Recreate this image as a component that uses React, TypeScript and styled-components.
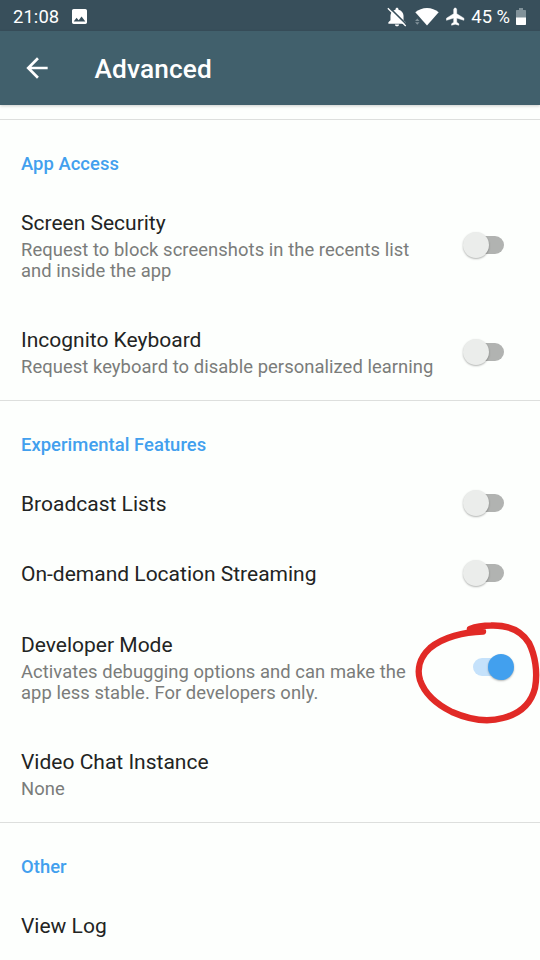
import React from 'react';
import styled, { createGlobalStyle } from 'styled-components';

const GlobalStyle = createGlobalStyle`
  * { box-sizing: border-box; }
  body { margin: 0; background: #fdfffd; }
`;

const Screen = styled.div`
  position: relative;
  display: flex;
  flex-direction: column;
  width: 540px;
  height: 960px;
  overflow: hidden;
  background: #fdfffd;
  font-family: Roboto, 'Liberation Sans', sans-serif;
`;

const StatusBar = styled.header`
  display: flex;
  align-items: center;
  justify-content: space-between;
  flex: none;
  height: 31px;
  padding: 2px 14px 0 13px;
  background: #384f5b;
  color: #fff;
  font-size: 18.4px;
`;

const StatusLeft = styled.div`
  display: flex;
  align-items: center;
  gap: 13px;
`;

const StatusRight = styled.div`
  display: flex;
  align-items: center;
`;

const Clock = styled.span`
  letter-spacing: 0.1px;
`;

const WifiIcon = styled.svg`
  margin-left: 5px;
`;

const BatteryLevel = styled.span`
  margin: 0 6px 0 0;
  white-space: nowrap;
`;

const AppBar = styled.nav`
  display: flex;
  align-items: center;
  flex: none;
  height: 74px;
  padding: 0 21px;
  background: #41606c;
  color: #fff;
  box-shadow: 0 1px 3px rgba(0, 0, 0, 0.2);
  z-index: 1;
`;

const BackButton = styled.button`
  display: flex;
  width: 32px;
  height: 32px;
  padding: 0;
  border: 0;
  background: none;
  color: inherit;
`;

const PageTitle = styled.h1`
  margin: 2px 0 0 41.5px;
  font-size: 26.25px;
  font-weight: 500;
  letter-spacing: 0.12px;
  line-height: 32px;
`;

const Settings = styled.main`
  flex: none;
  padding-top: 14px;
`;

const Section = styled.section`
  border-top: 1.5px solid #dddfdd;
`;

const SectionTitle = styled.h2`
  display: flex;
  align-items: center;
  height: 66.5px;
  margin: 0;
  padding: 21px 21px 0;
  color: #42a0ee;
  font-size: 18.4px;
  font-weight: 500;
  letter-spacing: 0.05px;
`;

const Row = styled.div<{ $height: number }>`
  display: flex;
  align-items: center;
  height: ${(p) => p.$height}px;
  padding: 0 26px 0 21px;
`;

const RowText = styled.div<{ $detailed: boolean }>`
  flex: 1;
  padding-top: ${(p) => (p.$detailed ? 1.5 : 2.5)}px;
`;

const RowTitle = styled.div`
  color: #222423;
  font-size: 21px;
  line-height: 25px;
`;

const Summary = styled.div`
  margin-top: 3px;
  color: #7a7c7a;
  font-size: 18.4px;
  letter-spacing: 0.055px;
  line-height: 21.5px;
  white-space: pre-line;
`;

const Track = styled.div<{ $on: boolean }>`
  display: flex;
  align-items: center;
  justify-content: ${(p) => (p.$on ? 'flex-end' : 'flex-start')};
  flex: none;
  width: 31px;
  height: 18px;
  margin-right: 10px;
  border-radius: 9px;
  background: ${(p) => (p.$on ? '#c5e2fb' : '#b1b3b1')};
`;

const Thumb = styled.div<{ $on: boolean }>`
  flex: none;
  width: 26px;
  height: 26px;
  margin: 0 -10px;
  border-radius: 50%;
  background: ${(p) => (p.$on ? '#42a0ee' : '#ebedeb')};
  box-shadow: 0 1px 2px rgba(0, 0, 0, 0.3);
`;

const Marker = styled.svg`
  position: absolute;
  left: 400px;
  top: 610px;
  pointer-events: none;
`;

function Toggle({ on }: { on: boolean }) {
  return (
    <Track $on={on} role="switch" aria-checked={on}>
      <Thumb $on={on} />
    </Track>
  );
}

interface Item {
  title: string;
  summary?: string;
  on?: boolean;
  height: number;
}

const sections: { title: string; items: Item[] }[] = [
  {
    title: 'App Access',
    items: [
      {
        title: 'Screen Security',
        summary: 'Request to block screenshots in the recents list\nand inside the app',
        on: false,
        height: 117.5,
      },
      {
        title: 'Incognito Keyboard',
        summary: 'Request keyboard to disable personalized learning',
        on: false,
        height: 96,
      },
    ],
  },
  {
    title: 'Experimental Features',
    items: [
      { title: 'Broadcast Lists', on: false, height: 70.5 },
      { title: 'On-demand Location Streaming', on: false, height: 70.5 },
      {
        title: 'Developer Mode',
        summary: 'Activates debugging options and can make the\napp less stable. For developers only.',
        on: true,
        height: 117.5,
      },
      { title: 'Video Chat Instance', summary: 'None', height: 96 },
    ],
  },
  { title: 'Other', items: [{ title: 'View Log', height: 70.5 }] },
];

export default function App() {
  return (
    <Screen>
      <GlobalStyle />
      <StatusBar>
        <StatusLeft>
          <Clock>21:08</Clock>
          <svg width="15" height="15" viewBox="3 3 18 18" fill="#fff">
            <path d="M21 19V5c0-1.100-.9-2-2-2H5c-1.100 0-2 .9-2 2v14c0 1.100.9 2 2 2h14c1.100 0 2-.9 2-2zM8.500 13.500l2.500 3.010L14.500 12l4.500 6H5l3.500-4.500z" />
          </svg>
        </StatusLeft>
        <StatusRight>
          <svg width="20" height="20" viewBox="0 0 19 19">
            <path d="M9.500 .6c-.8 0-1.400.6-1.400 1.400v.6C5.200 3.300 3.300 5.600 3.300 8.400v4.200L1.300 14.600v1.200h16.400v-1.200l-2-2V8.400c0-2.800-1.900-5.100-4.800-5.800V2c0-.8-.6-1.400-1.400-1.400zM7.500 16.600c0 1 .9 1.800 2 1.800s2-.8 2-1.800z" fill="#fff" />
            <path d="M1.700 0L19 17" stroke="#384f5b" strokeWidth="1.600" />
            <path d="M.8 1.200L17.800 18" stroke="#fff" strokeWidth="1.300" />
          </svg>
          <WifiIcon width="27" height="19" viewBox="0 0 27 19">
            <path d="M3.300 5.200C6.400 2.700 10.600 1 15 1s8.600 1.700 11.700 4.200L15 18.500z" fill="#fff" />
            <path d="M5.300 11.400l2.200 2.500H3.100zM5.300 17.700l2.200-2.500H3.100z" fill="#81929a" />
          </WifiIcon>
          <svg width="32" height="20" viewBox="0 0 32 20">
            <path d="M24.900 13.300v-2.100l-7.200-4.500V2.700c0-1-.7-1.700-1.500-1.700s-1.500.7-1.500 1.700v4l-7.200 4.500v2.100l7.200-2.300v4.300l-2.100 1.500v1.400l3.600-1 3.600 1v-1.400l-2.100-1.500V11z" fill="#fff" stroke="#fff" strokeWidth=".5" />
          </svg>
          <BatteryLevel>45 %</BatteryLevel>
          <svg width="10" height="17" viewBox="0 0 10 17">
            <path d="M3 0h4v2h2c.6 0 1 .4 1 1v7H0V3c0-.6.4-1 1-1h2z" fill="#81929a" />
            <path d="M0 9.500h10V16c0 .6-.4 1-1 1H1c-.6 0-1-.4-1-1z" fill="#fff" />
          </svg>
        </StatusRight>
      </StatusBar>
      <AppBar>
        <BackButton aria-label="Back">
          <svg width="32" height="32" viewBox="0 0 24 24" fill="currentColor">
            <path d="M20 11H7.830l5.590-5.590L12 4l-8 8 8 8 1.410-1.410L7.830 13H20v-2z" />
          </svg>
        </BackButton>
        <PageTitle>Advanced</PageTitle>
      </AppBar>
      <Settings>
        {sections.map((section) => (
          <Section key={section.title}>
            <SectionTitle>{section.title}</SectionTitle>
            {section.items.map((item) => (
              <Row key={item.title} $height={item.height}>
                <RowText $detailed={item.summary !== undefined}>
                  <RowTitle>{item.title}</RowTitle>
                  {item.summary && <Summary>{item.summary}</Summary>}
                </RowText>
                {item.on !== undefined && <Toggle on={item.on} />}
              </Row>
            ))}
          </Section>
        ))}
      </Settings>
      <Marker width="140" height="130" viewBox="0 0 140 130" fill="none">
        <path
          d="M83 21.500C64 22 43 27 30 38C19 48 17 60 20 70C25 85 38 95 52 102C68 109 86 113 103 108C119 104 131 94 135 78C138 62 135 45 129 33C121 20 108 15 91 15.500C82 15.500 75 17 70 19"
          stroke="#e12a26"
          strokeWidth="6.4"
          strokeLinecap="round"
          strokeLinejoin="round"
        />
      </Marker>
    </Screen>
  );
}
